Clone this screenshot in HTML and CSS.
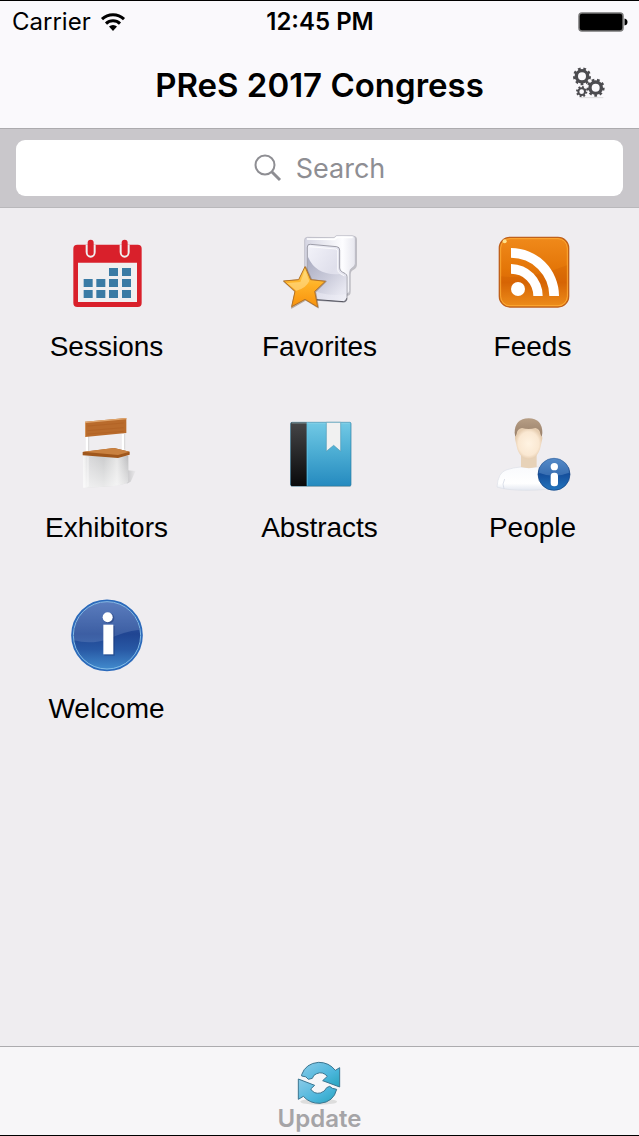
FILE: index.html
```html
<!DOCTYPE html>
<html lang="en">
<head>
    <meta charset="UTF-8">
    <meta name="viewport" content="width=device-width, initial-scale=1.0">
    <title>PReS 2017 Congress</title>
    <link rel="stylesheet" href="styles.css">
</head>
<body>
    <header class="header">
        <div class="status-bar">
            <div class="carrier">
                <span>Carrier</span>
                <svg class="wifi" viewBox="0 0 24 18" aria-hidden="true">
                    <g fill="none" stroke="#000" stroke-width="3">
                        <path d="M1 6.2a16 16 0 0 1 22 0"/>
                        <path d="M5 10.6a10 10 0 0 1 14 0"/>
                    </g>
                    <path d="M12 18l-4-4.4a5.8 5.8 0 0 1 8 0z"/>
                </svg>
            </div>
            <time class="clock">12:45 PM</time>
            <svg class="battery" viewBox="0 0 50 20" aria-hidden="true">
                <rect x="1" y="1" width="44" height="18" rx="3" stroke="#777" stroke-width="1.5"/>
                <path d="M46.500 6.500q3 .5 3 3.500t-3 3.500z"/>
            </svg>
        </div>
        <div class="nav-bar">
            <h1>PReS 2017 Congress</h1>
            <button class="settings-btn" type="button" aria-label="Settings">
                <svg viewBox="36 30 102 102" aria-hidden="true">
                    <path d="M58 125h72" stroke="#ddd" stroke-width="3"/>
                    <g fill="none" stroke="#4c4c50">
                        <circle cx="66" cy="61" r="17" stroke-width="10"/>
                        <circle cx="66" cy="61" r="23" stroke-width="8" pathLength="36" stroke-dasharray="2 2"/>
                        <circle cx="107" cy="95" r="17" stroke-width="10"/>
                        <circle cx="107" cy="95" r="23" stroke-width="8" pathLength="36" stroke-dasharray="2 2"/>
                        <circle cx="65" cy="107" r="10" stroke-width="6"/>
                        <circle cx="65" cy="107" r="14" stroke-width="6" pathLength="32" stroke-dasharray="2 2"/>
                    </g>
                </svg>
            </button>
        </div>
    </header>

    <form class="search-bar" role="search">
        <label class="search-box">
            <svg class="search-icon" viewBox="0 0 28 28" fill="none" stroke="#8e8e93" aria-hidden="true">
                <circle cx="11" cy="11" r="9.500" stroke-width="2"/>
                <path d="M18 18l8 8" stroke-width="3"/>
            </svg>
            <input type="search" placeholder="Search" aria-label="Search">
        </label>
    </form>

    <main class="menu">
        <a class="menu-item" href="#sessions">
            <svg viewBox="30 18 216 216" aria-hidden="true">
                <rect x="37" y="44" width="205" height="187" rx="12" fill="#d9202b"/>
                <path d="M51 98h177v118H51z" fill="#f0eff1"/>
                <path d="M74 44v22a15 17 0 0 0 30 0V44M176 44v22a15 17 0 0 0 30 0V44" fill="#f0eff1"/>
                <rect x="80" y="29" width="18" height="48" rx="9" fill="#d9202b"/>
                <rect x="182" y="29" width="18" height="48" rx="9" fill="#d9202b"/>
                <path d="M144 114h27v24h-27zM183 114h27v24h-27zM68 147h27v24H68zM106 147h27v24h-27zM144 147h27v24h-27zM183 147h27v24h-27zM68 180h27v24H68zM106 180h27v24h-27zM144 180h27v24h-27zM183 180h27v24h-27z" fill="#3a7ba5"/>
            </svg>
            <span>Sessions</span>
        </a>
        <a class="menu-item" href="#favorites">
            <svg viewBox="33 33 216 216" aria-hidden="true">
                <defs>
                    <linearGradient id="folder-back" x1="0" y1="0" x2="1" y2="0">
                        <stop offset="0" stop-color="#d5d5e2"/>
                        <stop offset=".75" stop-color="#fdfdff"/>
                        <stop offset="1" stop-color="#e6e6ee"/>
                    </linearGradient>
                    <linearGradient id="folder-front" x1="0" y1="0" x2="1" y2="1">
                        <stop offset="0" stop-color="#f3f3fa"/>
                        <stop offset=".55" stop-color="#dfdfeb"/>
                        <stop offset="1" stop-color="#f1f1f8"/>
                    </linearGradient>
                    <linearGradient id="folder-shade" x1="0" y1="0" x2="1" y2="1">
                        <stop offset="0" stop-color="#9295ae"/>
                        <stop offset=".9" stop-color="#e6e6f0"/>
                    </linearGradient>
                    <linearGradient id="star" x1="0" y1="0" x2="0" y2="1">
                        <stop offset="0" stop-color="#ffd257"/>
                        <stop offset=".45" stop-color="#ffb125"/>
                        <stop offset="1" stop-color="#f8920d"/>
                    </linearGradient>
                </defs>
                <path d="M99 47q0-10 10-10l76 1 6-5h50q11 0 11 11v74q0 12-10 16-9 4-9 14v52q0 12-10 12h-25L99 224z" fill="#777783" opacity=".4"/>
                <path d="M95 45q0-8 8-8l80 1 7-6h48q9 0 9 9v74q0 9-9 13-8 4-8 14v55q0 9-9 9h-27L95 219z" fill="url(#folder-back)" stroke="#b2b2bd" stroke-width="2"/>
                <path d="M102 42l82 1 9-6h46" fill="none" stroke="#fff" stroke-width="5"/>
                <path d="M103 66q0-9 9-8l79 7q9 1 9 10v54q0 8 8 12l9 5q5 3 5 9v65q0 12-11 11l-108-7z" fill="url(#folder-front)" stroke="#777783" stroke-width="2"/>
                <path d="M105 96q25 57 95 51l20 7v53q-66 10-115-18z" fill="url(#folder-shade)" opacity=".75"/>
                <path d="M109 65l79 7q6 1 6 7v53q0 10 8 14l12 7" fill="none" stroke="#fff" stroke-width="3" opacity=".8"/>
                <path d="M105 222l106 8q9 0 10-10" fill="none" stroke="#55555f" stroke-width="3"/>
                <path d="M98 126l18 39 43 4-32 31 9 48-38-23-42 24 11-49-35-31 46-4z" fill="#654321" stroke="#654321" stroke-width="4" stroke-linejoin="round" opacity=".4"/>
                <path d="M96 125l17 39 44 5-32 30 9 47-38-23-40 22 10-46-34-31 45-4z" fill="url(#star)" stroke="#b77324" stroke-width="3" stroke-linejoin="round"/>
                <path d="M96 135l-14 36-40 3 28 23q28-6 39-29z" fill="#ffe49a" opacity=".55"/>
            </svg>
            <span>Favorites</span>
        </a>
        <a class="menu-item" href="#feeds">
            <svg viewBox="27 27 216 216" aria-hidden="true">
                <defs>
                    <linearGradient id="feed" x1="0" y1="0" x2="0" y2="1">
                        <stop offset="0" stop-color="#f08a1b"/>
                        <stop offset=".45" stop-color="#e47608"/>
                        <stop offset=".65" stop-color="#dc6a06"/>
                        <stop offset="1" stop-color="#f99c22"/>
                    </linearGradient>
                </defs>
                <rect x="34" y="31" width="208" height="209" rx="32" fill="url(#feed)" stroke="#c0601a" stroke-width="4"/>
                <rect x="38" y="35" width="200" height="201" rx="28" fill="none" stroke="#ffb13b" stroke-width="3" opacity=".8"/>
                <path d="M39 148q88 11 198-33v86q0 34-32 34H69q-30 0-30-32z" fill="#bf4e00" opacity=".18"/>
                <circle cx="50" cy="43" r="6" fill="#ffe28b"/>
                <g fill="#fff">
                    <circle cx="90" cy="186" r="21"/>
                    <path d="M69 111a96 96 0 0 1 95 96h-28a67 67 0 0 0-67-67z"/>
                    <path d="M69 63a144 144 0 0 1 144 144h-29A115 115 0 0 0 69 92z"/>
                </g>
            </svg>
            <span>Feeds</span>
        </a>
        <a class="menu-item" href="#exhibitors">
            <svg viewBox="12 27 216 216" aria-hidden="true">
                <defs>
                    <linearGradient id="desk" x1="0" y1="0" x2="1" y2="0">
                        <stop offset="0" stop-color="#f8f8f8"/>
                        <stop offset=".12" stop-color="#d8d8da"/>
                        <stop offset=".45" stop-color="#cbcccd"/>
                        <stop offset=".75" stop-color="#e6e6e6"/>
                        <stop offset="1" stop-color="#bcbcbe"/>
                    </linearGradient>
                    <linearGradient id="desk-shine" x1="0" y1="0" x2="0" y2="1">
                        <stop offset="0" stop-color="#fff" stop-opacity="0"/>
                        <stop offset="1" stop-color="#fff" stop-opacity=".6"/>
                    </linearGradient>
                    <linearGradient id="desk-shadow" x1="0" y1="0" x2="1" y2="0">
                        <stop offset="0" stop-color="#b5b5b7"/>
                        <stop offset="1" stop-color="#e9e8ea"/>
                    </linearGradient>
                </defs>
                <path d="M181 187l25 2-15 32-12 6z" fill="url(#desk-shadow)" opacity=".7"/>
                <path d="M60 84v52M168 78v50" stroke="#fff" stroke-width="7"/>
                <path d="M65 84v48M173 78v46" stroke="#ccc" stroke-width="2"/>
                <path d="M54 41l124-11v45L54 87z" fill="#b96b2c"/>
                <path d="M54 41l124-11v4L56 45v41l-2 1z" fill="#e0a66d"/>
                <path d="M62 54l108-9M62 68l108-9M62 78l108-8" stroke="#a9571d" stroke-width="2" opacity=".5"/>
                <path d="M49 143h135v80q-24 12-69 13l-66 3z" fill="url(#desk)"/>
                <path d="M49 143h135v80q-24 12-69 13l-66 3z" fill="url(#desk-shine)"/>
                <path d="M63 146v90" stroke="#fff" stroke-width="2"/>
                <path d="M47 132l94-12 47 11v9l-35 10-106-8z" fill="#a0571c"/>
                <path d="M47 131l94-11 47 11-35 10z" fill="#c98140"/>
            </svg>
            <span>Exhibitors</span>
        </a>
        <a class="menu-item" href="#abstracts">
            <svg viewBox="18 21 216 216" aria-hidden="true">
                <defs>
                    <linearGradient id="book" x1="0" y1="0" x2="0" y2="1">
                        <stop offset="0" stop-color="#72c9e5"/>
                        <stop offset=".45" stop-color="#4daed4"/>
                        <stop offset="1" stop-color="#258abf"/>
                    </linearGradient>
                    <linearGradient id="spine" x1="0" y1="0" x2="0" y2="1">
                        <stop offset="0" stop-color="#454547"/>
                        <stop offset="1" stop-color="#09090a"/>
                    </linearGradient>
                </defs>
                <path d="M39 228h179" stroke="#888" stroke-width="4" opacity=".5"/>
                <rect x="38" y="37" width="181" height="191" rx="4" fill="url(#book)" stroke="#277ba1" stroke-width="2"/>
                <path d="M86 37v191H42q-4 0-4-4V41q0-4 4-4z" fill="url(#spine)"/>
                <path d="M88 38v189" stroke="#63c4e6" stroke-width="2"/>
                <path d="M41 39h174" stroke="#b4e4ef" stroke-width="2" opacity=".7"/>
                <path d="M145 37h43v87l-21-18-22 18z" fill="#f1f1f1" stroke="#549db6" stroke-width="2"/>
            </svg>
            <span>Abstracts</span>
        </a>
        <a class="menu-item" href="#people">
            <svg viewBox="27 21 216 216" aria-hidden="true">
                <defs>
                    <radialGradient id="skin">
                        <stop offset="0" stop-color="#fff3e2"/>
                        <stop offset=".75" stop-color="#fae8d2"/>
                        <stop offset="1" stop-color="#e6cdb0"/>
                    </radialGradient>
                    <linearGradient id="shirt" x1="0" y1="0" x2="0" y2="1">
                        <stop offset="0" stop-color="#f9fafd"/>
                        <stop offset=".7" stop-color="#fff"/>
                        <stop offset="1" stop-color="#e4e8f1"/>
                    </linearGradient>
                    <linearGradient id="hair" x1="0" y1="0" x2="0" y2="1">
                        <stop offset="0" stop-color="#b79e85"/>
                        <stop offset="1" stop-color="#957c66"/>
                    </linearGradient>
                    <linearGradient id="badge" x1="0" y1="0" x2="0" y2="1">
                        <stop offset="0" stop-color="#3d77bd"/>
                        <stop offset=".5" stop-color="#154f9c"/>
                        <stop offset="1" stop-color="#2274bd"/>
                    </linearGradient>
                </defs>
                <path d="M27 231q3-43 27-51 24-8 44-9h51q29 5 41 19 16 18 17 41-32 10-90 10-62 0-90-10z" fill="url(#shirt)" stroke="#dcdfe7" stroke-width="2"/>
                <path d="M48 236q-7-13 2-29" fill="none" stroke="#cbd2df" stroke-width="2"/>
                <path d="M99 132h47v39q-23 7-47 0z" fill="#e7d2b8"/>
                <path d="M80 69q0-43 42-44 41 1 41 44l-3 17H83z" fill="url(#hair)"/>
                <path d="M86 71q1-13 16-17 20 6 40 0 14 4 15 17l3 8q4-1 3 7l-4 18q-4 25-19 38-18 12-36 0-15-13-19-38l-4-18q-1-8 2-7z" fill="url(#skin)"/>
                <circle cx="198" cy="193" r="48" fill="url(#badge)" stroke="#103f81" stroke-width="2"/>
                <path d="M153 188a45 45 0 0 1 90 0q-45 19-90 0z" fill="#8db9e4" opacity=".3"/>
                <circle cx="199" cy="170" r="11" fill="#fff"/>
                <rect x="188" y="188" width="22" height="41" rx="10" fill="#fff"/>
            </svg>
            <span>People</span>
        </a>
        <a class="menu-item" href="#welcome">
            <svg viewBox="30 24 216 216" aria-hidden="true">
                <defs>
                    <linearGradient id="info" x1="0" y1="0" x2="0" y2="1">
                        <stop offset="0" stop-color="#4a6fb7"/>
                        <stop offset=".48" stop-color="#204592"/>
                        <stop offset=".7" stop-color="#2858a4"/>
                        <stop offset="1" stop-color="#438ed0"/>
                    </linearGradient>
                </defs>
                <circle cx="138" cy="136" r="105" fill="url(#info)" stroke="#2b6abb" stroke-width="5"/>
                <circle cx="138" cy="136" r="101" fill="none" stroke="#83bce7" stroke-width="3"/>
                <path d="M39 151a99 99 0 0 1 197-32q-50 6-90 27-57 19-107 5z" fill="#93aad8" opacity=".25"/>
                <g fill="#172f69" opacity=".4">
                    <circle cx="144" cy="84" r="16"/>
                    <path d="M130 108h31v89h-31z"/>
                </g>
                <g fill="#fff">
                    <circle cx="140" cy="82" r="15"/>
                    <path d="M127 104h30v89h-30z"/>
                </g>
            </svg>
            <span>Welcome</span>
        </a>
    </main>

    <footer class="tab-bar">
        <button class="update-btn" type="button">
            <svg viewBox="111 75 132 132" aria-hidden="true">
                <defs>
                    <linearGradient id="arrows" x1="0" y1="0" x2="1" y2="1">
                        <stop offset="0" stop-color="#8ccbe8"/>
                        <stop offset=".6" stop-color="#4cb6dc"/>
                        <stop offset="1" stop-color="#27a4bd"/>
                    </linearGradient>
                </defs>
                <ellipse cx="176" cy="197" rx="55" ry="9" fill="#ddd"/>
                <g fill="url(#arrows)" stroke="#3b7590" stroke-width="3" stroke-linejoin="round">
                    <path d="M125 116q12-34 51-37 31 0 50 24l13-8v58l-51-19 14-13q-14-16-32-8-10 3-13 14l-12 3q-5-10-20-10z"/>
                    <path d="M115 129l49 19-12 11q10 16 29 12 14-4 19-16l9-4q7 8 21 9-9 38-50 42-30 1-50-21l-15 9z"/>
                </g>
            </svg>
            <span>Update</span>
        </button>
    </footer>
</body>
</html>
```
FILE: styles.css
```css
:root {
    --bg: #efedf0;
    --bar: #faf9fc;
    --line: #acabae;
    --muted: #8e8e93;
}

* {
    box-sizing: border-box;
}

body {
    display: flex;
    flex-direction: column;
    min-height: 100vh;
    margin: 0;
    border-top: 1px solid #000;
    border-bottom: 1px solid #000;
    background: var(--bg);
    color: #000;
    font-family: Inter, sans-serif;
}

svg {
    display: block;
    overflow: visible;
}

button {
    padding: 0;
    border: none;
    background: none;
    font-family: inherit;
    cursor: pointer;
}

.header {
    background: var(--bar);
    border-bottom: 1px solid var(--line);
}

.status-bar {
    display: grid;
    grid-template-columns: 1fr auto 1fr;
    align-items: center;
    height: 41px;
    padding: 0 11px 0 12px;
    font-size: 24px;
    line-height: 28px;
}

.carrier {
    display: flex;
    align-items: center;
    gap: 10px;
}

.wifi {
    width: 24px;
    height: 18px;
}

.clock {
    font-weight: 600;
}

.battery {
    justify-self: end;
    width: 50px;
    height: 20px;
}

.nav-bar {
    display: grid;
    grid-template-columns: 1fr auto 1fr;
    align-items: center;
    height: 86px;
    padding: 0 33px;
}

.nav-bar h1 {
    grid-column: 2;
    margin: 0;
    font-size: 33px;
    font-weight: 600;
    line-height: 40px;
}

.settings-btn {
    justify-self: end;
    padding-bottom: 4px;
}

.settings-btn svg {
    width: 34px;
    height: 34px;
}

.search-bar {
    padding: 11px 16px;
    background: #c9c7cb;
    border-bottom: 1px solid #b9b8bb;
}

.search-box {
    display: flex;
    align-items: center;
    justify-content: center;
    gap: 14px;
    height: 56px;
    border-radius: 9px;
    background: #fff;
    cursor: text;
}

.search-icon {
    width: 28px;
    height: 28px;
}

.search-box input {
    field-sizing: content;
    padding: 0;
    border: none;
    outline: none;
    background: none;
    appearance: none;
    font-family: inherit;
    font-size: 27px;
    line-height: 32px;
}

.search-box input::placeholder {
    color: var(--muted);
    opacity: 1;
}

.menu {
    display: grid;
    grid-template-columns: repeat(3, 1fr);
    align-content: start;
    row-gap: 54px;
    flex: 1;
    padding: 28px 0;
}

.menu-item {
    display: flex;
    flex-direction: column;
    align-items: center;
    gap: 23px;
    color: #000;
    font-family: "Liberation Sans", Arial, sans-serif;
    font-size: 28px;
    line-height: 32px;
    text-decoration: none;
}

.menu-item svg {
    width: 72px;
    height: 72px;
}

.tab-bar {
    display: flex;
    justify-content: center;
    height: 89px;
    padding-top: 14px;
    background: #f7f6f8;
    border-top: 1px solid var(--line);
}

.update-btn {
    display: flex;
    flex-direction: column;
    align-items: center;
    color: #a5a4a7;
    font-size: 24px;
    font-weight: 600;
    line-height: 28px;
}

.update-btn svg {
    width: 44px;
    height: 44px;
}
```
